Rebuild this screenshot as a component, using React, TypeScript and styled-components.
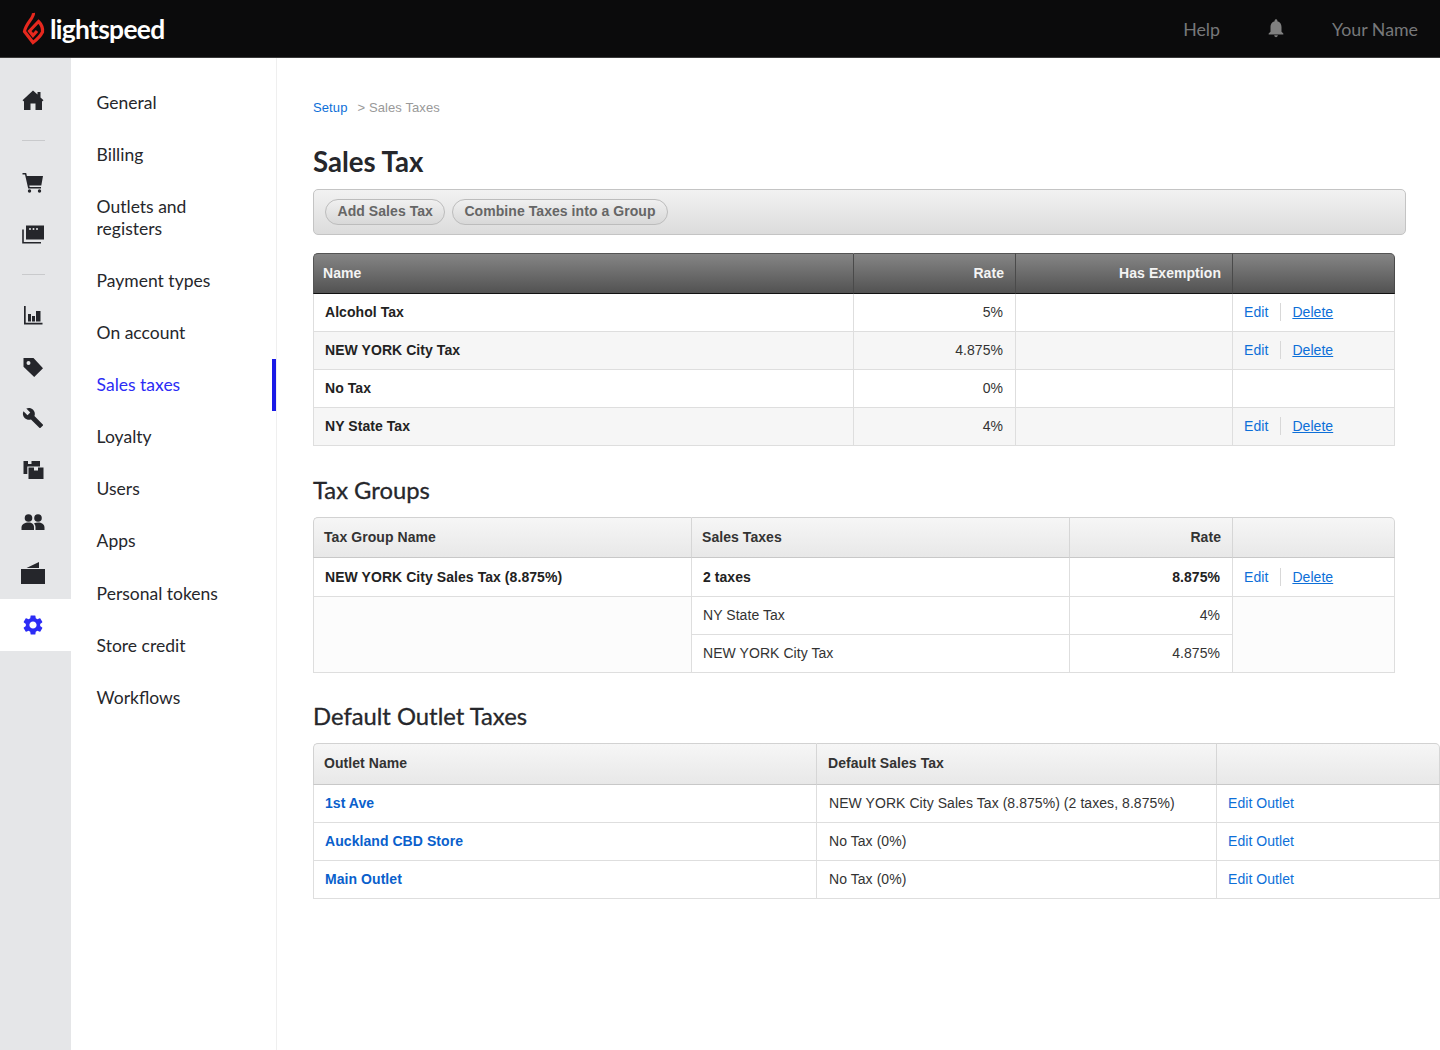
import { ReactNode } from 'react'
import styled, { createGlobalStyle } from 'styled-components'
import { MdBuild, MdSettings, MdNotifications } from 'react-icons/md'

const GlobalStyle = createGlobalStyle`
  html, body {
    margin: 0;
    padding: 0;
    background: #fff;
    font-family: "Liberation Sans", Arial, sans-serif;
  }
  * {
    box-sizing: border-box;
  }
`

const Page = styled.div`
  width: 1440px;
  height: 1050px;
  overflow: hidden;
  display: flex;
  flex-direction: column;
`

const TopBar = styled.header`
  height: 58px;
  flex: none;
  background: #0b0b0c;
  border-bottom: 1px solid #3a3a3a;
  display: flex;
  align-items: center;
  padding: 0 22px 0 22px;
`

const Brand = styled.div`
  display: flex;
  align-items: center;
  gap: 4px;
  margin-right: auto;
`

const BrandName = styled.span`
  font-family: Lato, sans-serif;
  font-weight: 700;
  font-size: 26.4px;
  letter-spacing: -0.7px;
  color: #fff;
  line-height: 34px;
`

const TopLink = styled.span`
  font-family: Lato, sans-serif;
  font-size: 17.8px;
  color: #77787a;
`

const BellWrap = styled.span`
  display: flex;
  margin: 0 45px 2px 45px;
  color: #808080;
`

const Body = styled.div`
  flex: 1;
  display: flex;
  min-height: 0;
`

const Rail = styled.nav`
  width: 71px;
  flex: none;
  background: #e5e6e8;
  padding-top: 16px;
`

const RailItem = styled.div<{ $active?: boolean }>`
  height: 51.7px;
  display: flex;
  align-items: center;
  justify-content: center;
  padding-right: 5px;
  color: ${({ $active }) => ($active ? '#2c2cf5' : '#25262b')};
  background: ${({ $active }) => ($active ? '#fff' : 'transparent')};
`

const RailDivider = styled.div`
  height: 30px;
  display: flex;
  align-items: center;
  padding-left: 22px;

  &::before {
    content: '';
    width: 23px;
    height: 1px;
    background: #c9cacc;
  }
`

const SubNav = styled.nav`
  width: 206px;
  flex: none;
  border-right: 1px solid #efefef;
  padding-top: 18.7px;
`

const SubNavItem = styled.div<{ $active?: boolean }>`
  font-family: Lato, sans-serif;
  font-size: 17.5px;
  line-height: 22px;
  padding: 15.05px 30px 15.05px 25.6px;
  color: ${({ $active }) => ($active ? '#2c2cf5' : '#26272b')};
  border-right: 4px solid ${({ $active }) => ($active ? '#1a1ae6' : 'transparent')};
`

const Main = styled.main`
  flex: 1;
  min-width: 0;
  padding: 42px 0 0 36px;
`

const Crumbs = styled.div`
  font-size: 13px;
  letter-spacing: 0.1px;
  line-height: 16px;
  color: #999;
  margin-bottom: 30px;

  a {
    color: #0d6fd8;
    margin-right: 10px;
    text-decoration: none;
  }
`

const Title = styled.h1`
  font-family: Lato, sans-serif;
  font-size: 27.6px;
  font-weight: 700;
  line-height: 31px;
  color: #26272b;
  margin: 0 0 12px;
`

const SectionTitle = styled.h2<{ $before?: number }>`
  font-family: Lato, sans-serif;
  font-size: 23.8px;
  font-weight: 400;
  -webkit-text-stroke: 0.3px #26272b;
  line-height: 30px;
  color: #26272b;
  margin: ${({ $before }) => $before ?? 29}px 0 12px;
`

const Toolbar = styled.div`
  width: 1093px;
  height: 46px;
  display: flex;
  align-items: center;
  gap: 6.5px;
  padding: 0 11px 1px;
  margin-bottom: 18px;
  border: 1px solid #c4c4c4;
  border-radius: 5px;
  background: linear-gradient(#f2f2f2, #dcdcdc);
`

const PillButton = styled.button`
  height: 26px;
  padding: 0 11.5px 2px;
  border: 1px solid #bcbcbc;
  border-radius: 13px;
  background: linear-gradient(#f0f0f0, #d8d8d8);
  font-family: "Liberation Sans", Arial, sans-serif;
  font-size: 14px;
  font-weight: 700;
  letter-spacing: 0.06px;
  color: #666;
`

const Table = styled.table<{ $width: number }>`
  width: ${({ $width }) => $width}px;
  table-layout: fixed;
  border-collapse: separate;
  border-spacing: 0;
  font-size: 14px;
  letter-spacing: 0.06px;
  color: #333;
`

const OutletTable = styled(Table)`
  th {
    height: 42px;
  }
  th:nth-child(2) {
    padding-left: 11px;
  }
  td:nth-child(2) {
    padding-left: 12px;
  }
`

const HeadCell = styled.th<{ $dark?: boolean; $right?: boolean }>`
  height: 41px;
  padding: 0 11px 2px ${({ $dark }) => ($dark ? 9 : 10)}px;
  font-weight: 700;
  text-align: ${({ $right }) => ($right ? 'right' : 'left')};
  color: ${({ $dark }) => ($dark ? '#f4f4f4' : '#333')};
  background: ${({ $dark }) =>
    $dark ? 'linear-gradient(#858585, #525252)' : 'linear-gradient(#f6f6f6, #e8e8e8)'};
  border-top: 1px solid ${({ $dark }) => ($dark ? '#555' : '#d2d2d2')};
  border-right: 1px solid ${({ $dark }) => ($dark ? '#4a4a4a' : '#d6d6d6')};
  border-bottom: 1px solid ${({ $dark }) => ($dark ? '#111' : '#c8c8c8')};

  &:first-child {
    border-left: 1px solid ${({ $dark }) => ($dark ? '#555' : '#d2d2d2')};
    border-top-left-radius: 5px;
  }
  &:last-child {
    border-top-right-radius: 5px;
  }
`

const Cell = styled.td<{
  $right?: boolean
  $bold?: boolean
  $h?: number
  $stripe?: boolean
  $flush?: boolean
}>`
  height: ${({ $h }) => $h ?? 38}px;
  padding: 0 12px 1px 11px;
  text-align: ${({ $right }) => ($right ? 'right' : 'left')};
  font-weight: ${({ $bold }) => ($bold ? 700 : 400)};
  color: ${({ $bold }) => ($bold ? '#222' : '#333')};
  background: ${({ $stripe }) => ($stripe ? '#f6f6f6' : '#fff')};
  border-right: 1px solid #dedede;
  border-bottom: 1px solid #dedede;

  &:first-child {
    border-left: ${({ $flush }) => ($flush ? '0' : '1px solid #dedede')};
  }
`

const BlankCell = styled(Cell)`
  background: #fcfcfc;
`

const TextLink = styled.a`
  color: #0d6fd8;
  text-decoration: none;
`

const BoldLink = styled(TextLink)`
  font-weight: 700;
  color: #0a5fcc;
`

const EditLink = styled(TextLink)`
  display: inline-block;
  line-height: 18px;
  padding-right: 12px;
  margin-right: 11px;
  border-right: 1px solid #d8d8d8;
`

const DeleteLink = styled(TextLink)`
  text-decoration: underline;
`

const HomeIcon = () => (
  <svg width="24" height="24" viewBox="0 0 24 24" fill="currentColor">
    <path d="M12 2.500 1.500 12.200 3 13.400V22h6.500v-6.500h5V22H21v-8.600l1.500-1.200-3-2.800V4h-3v2.600z" />
  </svg>
)

const CartIcon = () => (
  <svg width="24" height="24" viewBox="0 0 24 24" fill="currentColor">
    <path d="M1.500 3h3.700l.7 3H22l-1.700 9.500H8.300l.3 1.500H20v1.600H7.200L4 4.600H1.500z" />
    <circle cx="8.500" cy="21" r="1.700" />
    <circle cx="18.500" cy="21" r="1.700" />
  </svg>
)

const RegisterIcon = () => (
  <svg width="24" height="24" viewBox="0 -1 24 24">
    <path fill="currentColor" d="M5 3.500h18v14H5z" />
    <path fill="none" stroke="currentColor" strokeWidth="1.600" d="M2 7.500v13.300h18" />
    <circle cx="9" cy="7" r="1" fill="#e5e6e8" />
    <circle cx="12.500" cy="7" r="1" fill="#e5e6e8" />
    <circle cx="16" cy="7" r="1" fill="#e5e6e8" />
  </svg>
)

const ChartIcon = () => (
  <svg width="24" height="24" viewBox="0 0 24 24" fill="currentColor">
    <path d="M3 3h1.700v16.800H21.500v1.700H3z" />
    <path d="M7 11h3v7.500H7zM11 13h3v5.500h-3zM15 8h4.500v10.500H15z" />
  </svg>
)

const TagIcon = () => (
  <svg width="24" height="24" viewBox="0 0 24 24">
    <path
      fillRule="evenodd"
      fill="currentColor"
      d="M2.500 3h10L22 13.200 13.200 22 2.500 11.800zM7.500 6a2 2 0 1 0 0 4 2 2 0 0 0 0-4z"
    />
  </svg>
)

const BoxIcon = () => (
  <svg width="24" height="24" viewBox="0 0 24 24" fill="currentColor">
    <path d="M2.500 3h4.500v3h3.500V3H19v5.500H6.300V16H2.500z" />
    <path fillRule="evenodd" d="M7.500 9.500h15V21h-15zM13 9.500v3h4v-3z" />
  </svg>
)

const UsersIcon = () => (
  <svg width="24" height="24" viewBox="0 0 24 24" fill="currentColor">
    <circle cx="7.500" cy="8" r="3.800" />
    <circle cx="17" cy="8" r="3.800" />
    <path d="M0.500 20v-2.500C0.500 14 4 12.500 7.500 12.500s5.500 1.500 5.500 5V20z" />
    <path d="M14.500 20v-3c0-1.500-.7-2.700-1.600-3.600 1.200-.6 2.700-.9 4.100-.9 3.500 0 6.500 1.500 6.500 5V20z" />
  </svg>
)

const WalletIcon = () => (
  <svg width="26" height="24" viewBox="0 0 26 24" fill="currentColor">
    <path d="M1 8h24v15H1zM6.500 7 19 1v6z" />
  </svg>
)

const FlameLogo = () => (
  <svg width="24" height="35" viewBox="0 0 24 35" fill="none" stroke="#e6281e" strokeWidth="3.200">
    <path d="M11.500 2C12 7 4 12 2.500 20.500L11 31.500C15 28.500 19 24 20.500 21 21 17 19 13 16.500 10.500L7.500 20 11 24.500 15 20" />
  </svg>
)

const railTop: ReactNode[] = [<HomeIcon />]
const railMid: ReactNode[] = [<CartIcon />, <RegisterIcon />]
const railLow: ReactNode[] = [
  <ChartIcon />,
  <TagIcon />,
  <MdBuild size={22} />,
  <BoxIcon />,
  <UsersIcon />,
  <WalletIcon />,
]

const subNav = [
  'General',
  'Billing',
  'Outlets and registers',
  'Payment types',
  'On account',
  'Sales taxes',
  'Loyalty',
  'Users',
  'Apps',
  'Personal tokens',
  'Store credit',
  'Workflows',
]

const salesTaxes = [
  { name: 'Alcohol Tax', rate: '5%', editable: true },
  { name: 'NEW YORK City Tax', rate: '4.875%', editable: true },
  { name: 'No Tax', rate: '0%', editable: false },
  { name: 'NY State Tax', rate: '4%', editable: true },
]

const outlets = [
  { name: '1st Ave', tax: 'NEW YORK City Sales Tax (8.875%) (2 taxes, 8.875%)' },
  { name: 'Auckland CBD Store', tax: 'No Tax (0%)' },
  { name: 'Main Outlet', tax: 'No Tax (0%)' },
]

const RowActions = () => (
  <>
    <EditLink>Edit</EditLink>
    <DeleteLink>Delete</DeleteLink>
  </>
)

const App = () => (
  <Page>
    <GlobalStyle />
    <TopBar>
      <Brand>
        <FlameLogo />
        <BrandName>lightspeed</BrandName>
      </Brand>
      <TopLink>Help</TopLink>
      <BellWrap>
        <MdNotifications size={22} />
      </BellWrap>
      <TopLink>Your Name</TopLink>
    </TopBar>
    <Body>
      <Rail>
        {railTop.map((icon, i) => (
          <RailItem key={i}>{icon}</RailItem>
        ))}
        <RailDivider />
        {railMid.map((icon, i) => (
          <RailItem key={i}>{icon}</RailItem>
        ))}
        <RailDivider />
        {railLow.map((icon, i) => (
          <RailItem key={i}>{icon}</RailItem>
        ))}
        <RailItem $active>
          <MdSettings size={24} />
        </RailItem>
      </Rail>
      <SubNav>
        {subNav.map((label) => (
          <SubNavItem key={label} $active={label === 'Sales taxes'}>
            {label}
          </SubNavItem>
        ))}
      </SubNav>
      <Main>
        <Crumbs>
          <a>Setup</a>&gt; Sales Taxes
        </Crumbs>
        <Title>Sales Tax</Title>
        <Toolbar>
          <PillButton>Add Sales Tax</PillButton>
          <PillButton>Combine Taxes into a Group</PillButton>
        </Toolbar>

        <Table $width={1082}>
          <colgroup>
            <col width={541} />
            <col width={162} />
            <col width={217} />
            <col width={162} />
          </colgroup>
          <thead>
            <tr>
              <HeadCell $dark>Name</HeadCell>
              <HeadCell $dark $right>Rate</HeadCell>
              <HeadCell $dark $right>Has Exemption</HeadCell>
              <HeadCell $dark />
            </tr>
          </thead>
          <tbody>
            {salesTaxes.map((tax, i) => (
              <tr key={tax.name}>
                <Cell $bold $stripe={i % 2 === 1}>{tax.name}</Cell>
                <Cell $right $stripe={i % 2 === 1}>{tax.rate}</Cell>
                <Cell $stripe={i % 2 === 1} />
                <Cell $stripe={i % 2 === 1}>{tax.editable && <RowActions />}</Cell>
              </tr>
            ))}
          </tbody>
        </Table>

        <SectionTitle>Tax Groups</SectionTitle>
        <Table $width={1082}>
          <colgroup>
            <col width={379} />
            <col width={378} />
            <col width={163} />
            <col width={162} />
          </colgroup>
          <thead>
            <tr>
              <HeadCell>Tax Group Name</HeadCell>
              <HeadCell>Sales Taxes</HeadCell>
              <HeadCell $right>Rate</HeadCell>
              <HeadCell />
            </tr>
          </thead>
          <tbody>
            <tr>
              <Cell $bold $h={39}>NEW YORK City Sales Tax (8.875%)</Cell>
              <Cell $bold $h={39}>2 taxes</Cell>
              <Cell $bold $right $h={39}>8.875%</Cell>
              <Cell $h={39}>
                <RowActions />
              </Cell>
            </tr>
            <tr>
              <BlankCell rowSpan={2} />
              <Cell>NY State Tax</Cell>
              <Cell $right>4%</Cell>
              <BlankCell rowSpan={2} />
            </tr>
            <tr>
              <Cell $flush>NEW YORK City Tax</Cell>
              <Cell $right>4.875%</Cell>
            </tr>
          </tbody>
        </Table>

        <SectionTitle $before={28}>Default Outlet Taxes</SectionTitle>
        <OutletTable $width={1127}>
          <colgroup>
            <col width={504} />
            <col width={400} />
            <col width={223} />
          </colgroup>
          <thead>
            <tr>
              <HeadCell>Outlet Name</HeadCell>
              <HeadCell>Default Sales Tax</HeadCell>
              <HeadCell />
            </tr>
          </thead>
          <tbody>
            {outlets.map((outlet) => (
              <tr key={outlet.name}>
                <Cell>
                  <BoldLink>{outlet.name}</BoldLink>
                </Cell>
                <Cell>{outlet.tax}</Cell>
                <Cell>
                  <TextLink>Edit Outlet</TextLink>
                </Cell>
              </tr>
            ))}
          </tbody>
        </OutletTable>
      </Main>
    </Body>
  </Page>
)

export default App
